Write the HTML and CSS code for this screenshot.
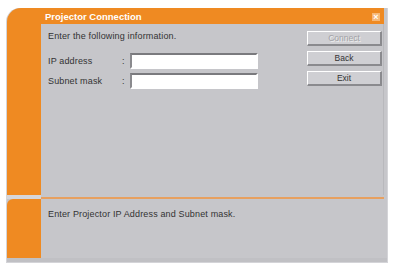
FILE: index.html
```html
<!DOCTYPE html>
<html lang="en">
<head>
    <meta charset="UTF-8">
    <title>Projector Connection</title>
    <link rel="stylesheet" href="styles.css">
</head>
<body>
    <div class="window">
        <div class="upper">
            <div class="side side-top"></div>
            <div class="main">
                <div class="titlebar">
                    <span class="title">Projector Connection</span>
                    <span class="close">&#215;</span>
                </div>
                <div class="content">
                    <div class="form">
                        <p class="intro">Enter the following information.</p>
                        <div class="row">
                            <label for="ip">IP address</label>
                            <span class="colon">:</span>
                            <input type="text" id="ip">
                        </div>
                        <div class="row">
                            <label for="mask">Subnet mask</label>
                            <span class="colon">:</span>
                            <input type="text" id="mask">
                        </div>
                    </div>
                    <div class="buttons">
                        <button class="btn" disabled>Connect</button>
                        <button class="btn">Back</button>
                        <button class="btn">Exit</button>
                    </div>
                </div>
            </div>
        </div>
        <div class="divider">
            <div class="gap"></div>
            <div class="line"></div>
        </div>
        <div class="lower">
            <div class="side side-bottom"></div>
            <div class="status">Enter Projector IP Address and Subnet mask.</div>
        </div>
    </div>
</body>
</html>
```

FILE: styles.css
```css
body {
    margin: 0;
    background: #fff;
    font-family: "Liberation Sans", Arial, sans-serif;
    font-size: 9px;
    letter-spacing: 0.15px;
    color: #333;
}
.window {
    margin: 8px 5px 0 6px;
    width: 380px;
    height: 254px;
    background: #c6c6ca;
    border: 1px solid #d4d4d8;
    border-top: none;
    border-radius: 14px 0 0 0;
    display: flex;
    flex-direction: column;
}
.upper {
    display: flex;
    height: 187px;
}
.side {
    width: 34px;
    background: #ef8a22;
    flex-shrink: 0;
}
.side-top {
    border-radius: 14px 0 0 0;
}
.side-bottom {
    border-radius: 6px 0 0 0;
}
.main {
    flex: 1;
    display: flex;
    flex-direction: column;
    padding-right: 3px;
}
.titlebar {
    height: 15px;
    background: #ef8a22;
    display: flex;
    align-items: center;
    justify-content: space-between;
    padding: 1px 4px 0 4px;
}
.title {
    color: #fff;
    font-weight: bold;
    font-size: 9.5px;
    letter-spacing: 0;
}
.close {
    width: 8px;
    height: 8px;
    background: #f6b878;
    color: #fff;
    font-size: 9px;
    font-weight: bold;
    line-height: 8px;
    text-align: center;
}
.content {
    flex: 1;
    display: flex;
    justify-content: space-between;
    padding: 7px 1px 0 7px;
    border-right: 1px solid #b8b8bc;
}
.intro {
    margin: 0 0 12px 0;
}
.row {
    display: flex;
    align-items: center;
    height: 16px;
    margin-bottom: 4px;
}
.row label {
    width: 74px;
}
.colon {
    width: 8px;
}
.row input {
    width: 124px;
    height: 12px;
    padding: 0;
    background: #fff;
    border: 2px solid #fff;
    border-top-color: #7a7a7e;
    border-left-color: #8a8a8e;
}
.buttons {
    display: flex;
    flex-direction: column;
    gap: 5px;
}
.btn {
    width: 75px;
    height: 15px;
    padding: 0;
    font-family: "Liberation Sans", Arial, sans-serif;
    font-size: 8.5px;
    color: #333;
    background: #cfcfd3;
    border: 1px solid #fff;
    border-right: 2px solid #8a8a8e;
    border-bottom: 2px solid #8a8a8e;
}
.btn:disabled {
    color: #a2a2a6;
    text-shadow: 1px 1px 0 #eee;
}
.divider {
    display: flex;
    height: 4px;
}
.gap {
    width: 34px;
    background: #d6d6da;
}
.line {
    flex: 1;
    margin: 2px 3px 0 0;
    height: 2px;
    background: #e7a060;
}
.lower {
    display: flex;
    flex: 1;
    border-bottom: 4px solid #c0c0c4;
}
.status {
    padding: 10px 0 0 7px;
}
```
